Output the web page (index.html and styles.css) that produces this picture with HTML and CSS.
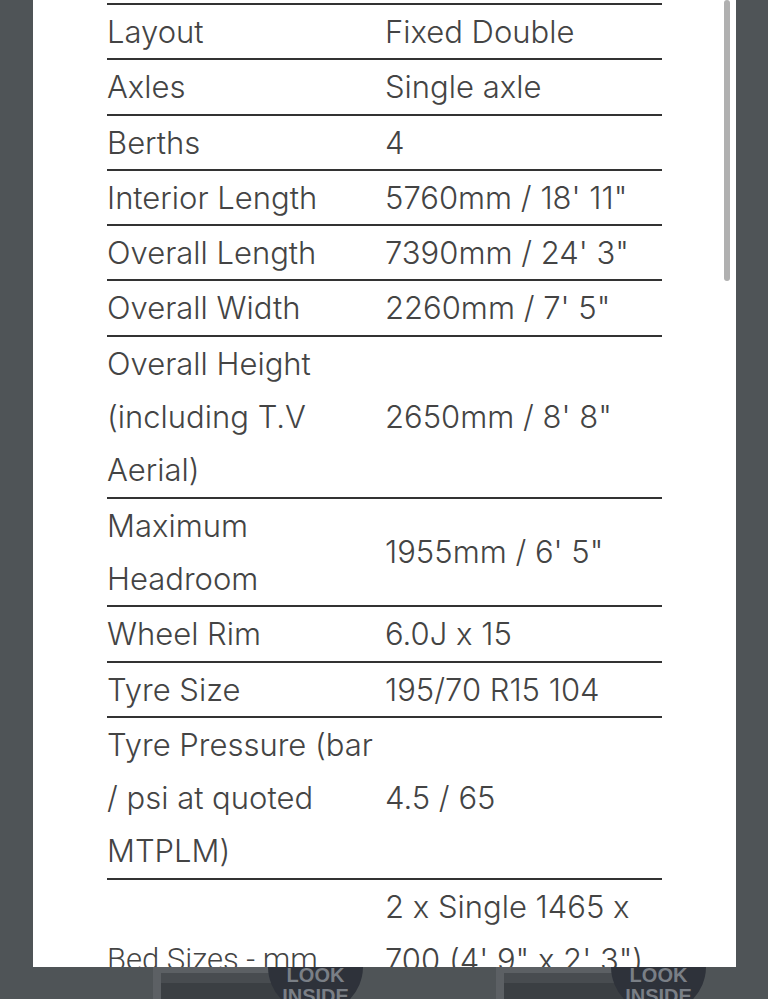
FILE: index.html
```html
<!DOCTYPE html>
<html>
<head>
<meta charset="utf-8">
<link rel="stylesheet" href="styles.css">
</head>
<body>
<div class="modal">
  <table class="specs">
    <tr><td>Layout</td><td>Fixed Double</td></tr>
    <tr><td>Axles</td><td>Single axle</td></tr>
    <tr><td>Berths</td><td>4</td></tr>
    <tr><td>Interior Length</td><td>5760mm / 18' 11"</td></tr>
    <tr><td>Overall Length</td><td>7390mm / 24' 3"</td></tr>
    <tr><td>Overall Width</td><td>2260mm / 7' 5"</td></tr>
    <tr><td>Overall Height (including T.V Aerial)</td><td>2650mm / 8' 8"</td></tr>
    <tr><td>Maximum Headroom</td><td>1955mm / 6' 5"</td></tr>
    <tr><td>Wheel Rim</td><td>6.0J x 15</td></tr>
    <tr><td>Tyre Size</td><td>195/70 R15 104</td></tr>
    <tr><td>Tyre Pressure (bar / psi at quoted MTPLM)</td><td>4.5 / 65</td></tr>
    <tr><td class="light">Bed Sizes - mm</td><td>2 x Single 1465 x 700 (4' 9" x 2' 3") Double&nbsp;1880&nbsp;x&nbsp;1360</td></tr>
  </table>
  <div class="scrollbar"></div>
</div>
<div class="behind">
  <div class="card">
    <div class="thumb"><div class="thumb-inner"></div></div>
    <div class="badge">LOOK<br>INSIDE</div>
  </div>
  <div class="card">
    <div class="thumb"><div class="thumb-inner"></div></div>
    <div class="badge">LOOK<br>INSIDE</div>
  </div>
</div>
</body>
</html>
```
FILE: styles.css
```css
html, body {
  margin: 0;
  padding: 0;
}
body {
  background: #4f5457;
  width: 768px;
  height: 999px;
  overflow: hidden;
  font-family: Inter, "Liberation Sans", sans-serif;
}
.modal {
  position: relative;
  margin-left: 33px;
  width: 703px;
  height: 967px;
  background: #ffffff;
  overflow: hidden;
}
.specs {
  margin-left: 74px;
  margin-top: 3px;
  width: 555px;
  border-collapse: collapse;
  table-layout: fixed;
  font-size: 31px;
  font-weight: 300;
  line-height: 53.3px;
  color: #444;
  letter-spacing: 0;
  font-feature-settings: "calt" 0;
}
.specs tr {
  border-top: 2px solid #333;
  border-bottom: 2px solid #333;
}
.specs td {
  padding: 0;
  vertical-align: middle;
  width: 50%;
}
.specs td:last-child {
  padding-left: 1px;
}
.specs td.light {
  font-family: Roboto, sans-serif;
  font-weight: 300;
}
.scrollbar {
  position: absolute;
  top: 0;
  left: 691px;
  width: 6px;
  height: 281px;
  background: #b0b0b0;
  border-radius: 3px;
}
.behind {
  display: flex;
  height: 32px;
  overflow: hidden;
  padding-left: 153px;
  gap: 133px;
}
.card {
  display: flex;
  width: 210px;
  position: relative;
}
.thumb {
  width: 137px;
  height: 40px;
  background: #5c6064;
  padding: 6px 8px 0;
  box-sizing: border-box;
}
.thumb-inner {
  height: 40px;
  background: #3b3f43;
  border-top: 10px solid #484c50;
}
.badge {
  position: absolute;
  left: 115px;
  top: -48px;
  width: 95px;
  height: 95px;
  border-radius: 50%;
  background: #2e323a;
  color: #7a7f86;
  font-family: "Liberation Sans", sans-serif;
  font-weight: bold;
  font-size: 20px;
  line-height: 21px;
  text-align: center;
  padding-top: 46px;
  box-sizing: border-box;
}
```
